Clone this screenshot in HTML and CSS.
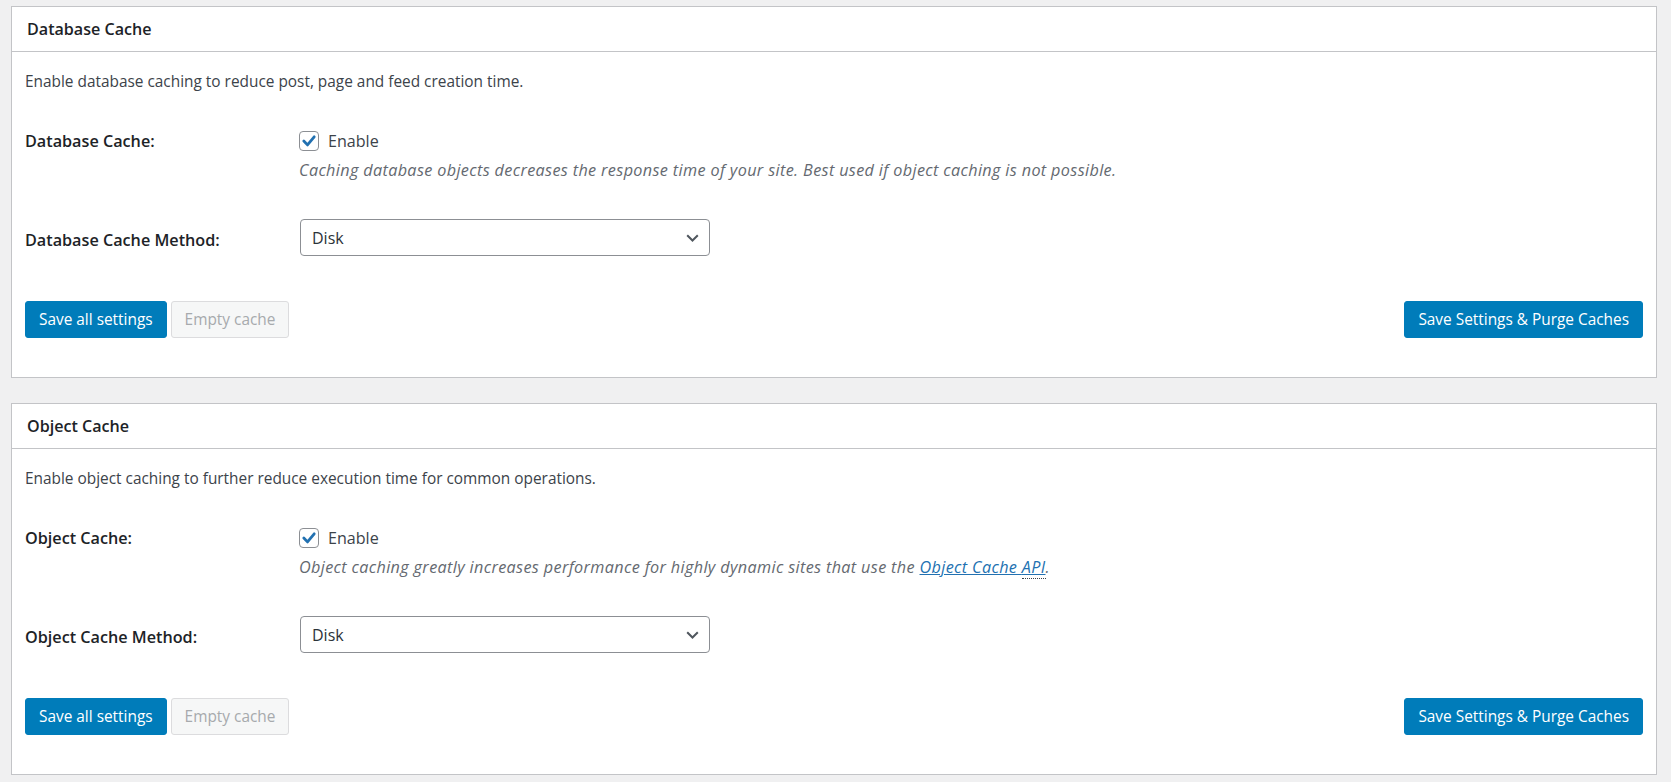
FILE: index.html
```html
<!DOCTYPE html>
<html lang="en">
<head>
<meta charset="utf-8">
<title>Database &amp; Object Cache</title>
<link rel="stylesheet" href="styles.css">
</head>
<body>
<div class="wrap">
  <section class="panel">
    <h3 class="panel-head">Database Cache</h3>
    <div class="panel-body">
      <p class="intro">Enable database caching to reduce post, page and feed creation time.</p>
      <div class="row row-check">
        <div class="label">Database Cache:</div>
        <div class="field">
          <label class="check-line">
            <span class="checkbox"><svg viewBox="0 0 20 20" width="20" height="20"><path d="M4.8 10 L8.5 13.9 L15.2 5.8" fill="none" stroke="#2271b1" stroke-width="2.8" stroke-linecap="round" stroke-linejoin="round"/></svg></span>
            <span class="check-text">Enable</span>
          </label>
          <p class="hint">Caching database objects decreases the response time of your site. Best used if object caching is not possible.</p>
        </div>
      </div>
      <div class="row row-select">
        <div class="label label-select">Database Cache Method:</div>
        <div class="field">
          <div class="select"><span>Disk</span><svg viewBox="0 0 13 8" width="13" height="8"><path d="M1.2 1.2 L6.5 6.5 L11.8 1.2" fill="none" stroke="#50575e" stroke-width="2"/></svg></div>
        </div>
      </div>
      <div class="actions">
        <div class="actions-left">
          <button class="btn btn-primary" type="button">Save all settings</button>
          <button class="btn btn-disabled" type="button" disabled>Empty cache</button>
        </div>
        <button class="btn btn-primary" type="button">Save Settings &amp; Purge Caches</button>
      </div>
    </div>
  </section>

  <section class="panel">
    <h3 class="panel-head">Object Cache</h3>
    <div class="panel-body">
      <p class="intro">Enable object caching to further reduce execution time for common operations.</p>
      <div class="row row-check">
        <div class="label">Object Cache:</div>
        <div class="field">
          <label class="check-line">
            <span class="checkbox"><svg viewBox="0 0 20 20" width="20" height="20"><path d="M4.8 10 L8.5 13.9 L15.2 5.8" fill="none" stroke="#2271b1" stroke-width="2.8" stroke-linecap="round" stroke-linejoin="round"/></svg></span>
            <span class="check-text">Enable</span>
          </label>
          <p class="hint">Object caching greatly increases performance for highly dynamic sites that use the <a href="#" class="link">Object Cache <abbr title="Application Programming Interface">API</abbr></a>.</p>
        </div>
      </div>
      <div class="row row-select">
        <div class="label label-select">Object Cache Method:</div>
        <div class="field">
          <div class="select"><span>Disk</span><svg viewBox="0 0 13 8" width="13" height="8"><path d="M1.2 1.2 L6.5 6.5 L11.8 1.2" fill="none" stroke="#50575e" stroke-width="2"/></svg></div>
        </div>
      </div>
      <div class="actions">
        <div class="actions-left">
          <button class="btn btn-primary" type="button">Save all settings</button>
          <button class="btn btn-disabled" type="button" disabled>Empty cache</button>
        </div>
        <button class="btn btn-primary" type="button">Save Settings &amp; Purge Caches</button>
      </div>
    </div>
  </section>
</div>
</body>
</html>
```

FILE: styles.css
```css
* { box-sizing: border-box; }

html, body {
  margin: 0;
  padding: 0;
  background: #f0f0f1;
  font-family: "Open Sans", "Noto Sans", "Liberation Sans", sans-serif;
  color: #3c434a;
}

.wrap {
  padding: 6px 14px 0 11px;
}

.panel {
  background: #fff;
  border: 1px solid #c3c4c7;
  margin: 0 0 25px 0;
}

.panel-head {
  margin: 0;
  height: 45px;
  border-bottom: 1px solid #c3c4c7;
  padding: 0 15px;
  display: flex;
  align-items: center;
  font-size: 16.1px;
  font-weight: 600;
  color: #1d2327;
}

.panel-body {
  padding: 0 13px 39px 13px;
}

.intro {
  margin: 20px 0 0 0;
  font-size: 15.4px;
  line-height: 20px;
  color: #3c434a;
}

.row {
  display: grid;
  grid-template-columns: 274px 1fr;
}

.row-check { margin-top: 37px; }
.row-select { margin-top: 38px; }

.label {
  font-size: 16.2px;
  font-weight: 600;
  line-height: 24px;
  color: #1d2327;
}

.label-select { padding-top: 9px; }

.check-line {
  display: flex;
  align-items: center;
  height: 24px;
}

.checkbox {
  width: 20px;
  height: 20px;
  border: 1px solid #8c8f94;
  border-radius: 4px;
  background: #fff;
  display: flex;
  align-items: center;
  justify-content: center;
  overflow: hidden;
}

.checkbox svg { display: block; flex: none; }

.check-text {
  margin-left: 9px;
  font-size: 16.1px;
  line-height: 24px;
  color: #3c434a;
}

.hint {
  margin: 6px 0 0 0;
  font-size: 16.2px;
  letter-spacing: 0.36px;
  line-height: 22px;
  font-style: italic;
  color: #646970;
}

.link {
  color: #2271b1;
  text-decoration: underline;
}

.link abbr {
  text-decoration: none;
  border-bottom: 1px dotted #3c434a;
}

.select {
  width: 410px;
  height: 37px;
  border: 1px solid #8c8f94;
  border-radius: 4px;
  padding: 0 10px 0 11px;
  display: flex;
  align-items: center;
  justify-content: space-between;
  font-size: 16px;
  color: #2c3338;
  margin-left: 1px;
}

.select svg { display: block; }

.actions {
  margin-top: 45px;
  display: flex;
  justify-content: space-between;
  align-items: center;
}

.actions-left {
  display: flex;
  gap: 4px;
}

.btn {
  height: 37px;
  padding: 0 13px;
  border-radius: 3px;
  font-family: inherit;
  font-size: 15.4px;
  line-height: 35px;
  cursor: pointer;
}

.btn-primary {
  background: #007cba;
  border: 1px solid #007cba;
  color: #fff;
}

.btn-disabled {
  background: #f6f7f7;
  border: 1px solid #dcdcde;
  color: #a7aaad;
  cursor: default;
}
```
